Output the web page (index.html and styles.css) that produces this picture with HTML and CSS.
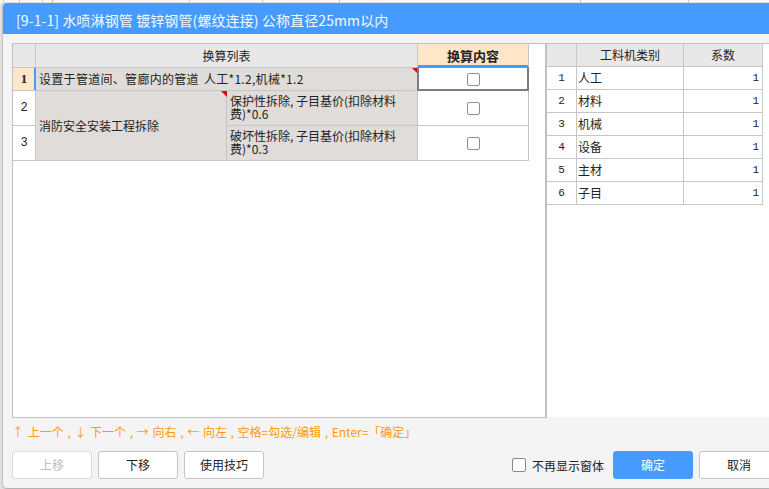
FILE: index.html
```html
<!DOCTYPE html>
<html lang="zh-CN">
<head>
<meta charset="utf-8">
<title>换算</title>
<link rel="stylesheet" href="styles.css">
</head>
<body>
<div class="bg-app">
  <span class="bg-cell w4"></span><span class="bg-cell w16"></span><span class="bg-cell w23"></span><span class="bg-cell w10 orange"></span><span class="bg-cell w137"></span><span class="bg-cell w73"></span><span class="bg-cell w77"></span><span class="bg-cell w241"></span><span class="bg-cell w108"></span>
</div>
<div class="dialog">
  <div class="titlebar">[9-1-1] 水喷淋钢管 镀锌钢管(螺纹连接) 公称直径25mm以内</div>
  <div class="dlg-body">
    <div class="panels">
      <div class="left-panel">
        <div class="grid-left">
          <div class="hc"></div>
          <div class="hc span2">换算列表</div>
          <div class="hc hl">换算内容</div>

          <div class="rn cur">1</div>
          <div class="tc span2 mark">设置于管道间、管廊内的管道 人工*1.2,机械*1.2</div>
          <div class="cc sel"><span class="cb"></span></div>

          <div class="rn">2</div>
          <div class="tc mark merged">消防安全安装工程拆除</div>
          <div class="tc wrap">保护性拆除, 子目基价(扣除材料费)*0.6</div>
          <div class="cc"><span class="cb"></span></div>

          <div class="rn">3</div>
          <div class="tc wrap">破坏性拆除, 子目基价(扣除材料费)*0.3</div>
          <div class="cc"><span class="cb"></span></div>
        </div>
      </div>
      <div class="splitter"></div>
      <div class="right-panel">
        <div class="grid-right">
          <div class="rh"></div><div class="rh">工料机类别</div><div class="rh">系数</div>
          <div class="rnum">1</div><div class="cat">人工</div><div class="coef">1</div>
          <div class="rnum">2</div><div class="cat">材料</div><div class="coef">1</div>
          <div class="rnum">3</div><div class="cat">机械</div><div class="coef">1</div>
          <div class="rnum">4</div><div class="cat">设备</div><div class="coef">1</div>
          <div class="rnum">5</div><div class="cat">主材</div><div class="coef">1</div>
          <div class="rnum">6</div><div class="cat">子目</div><div class="coef">1</div>
        </div>
      </div>
    </div>
    <div class="hint">↑ 上一个 , ↓ 下一个 , → 向右 , ← 向左 , 空格=勾选/编辑 , Enter=「确定」</div>
    <div class="footer">
      <div class="btn-group">
        <button class="btn disabled" type="button">上移</button>
        <button class="btn" type="button">下移</button>
        <button class="btn" type="button">使用技巧</button>
      </div>
      <label class="check-label"><span class="cb-lg"></span>不再显示窗体</label>
      <div class="btn-group">
        <button class="btn primary" type="button">确定</button>
        <button class="btn" type="button">取消</button>
      </div>
    </div>
  </div>
</div>
</body>
</html>
```

FILE: styles.css
```css
html, body {
  margin: 0;
  padding: 0;
}
body {
  width: 769px;
  height: 489px;
  overflow: hidden;
  background: #e4e4e4;
  font-family: "Noto Sans CJK SC", "Microsoft YaHei", sans-serif;
  color: #222;
}

/* remnant of the application behind the dialog */
.bg-app {
  height: 3px;
  display: flex;
  background: #fafafa;
  overflow: hidden;
}
.bg-cell {
  flex: none;
  height: 3px;
  border-right: 1px solid #c8c8c8;
  box-sizing: border-box;
}
.bg-cell.orange { border-right-color: #f0b060; }
.w4 { width: 4px; }
.w16 { width: 16px; }
.w23 { width: 23px; }
.w10 { width: 10px; }
.w137 { width: 137px; }
.w73 { width: 73px; }
.w77 { width: 77px; }
.w241 { width: 241px; }
.w108 { width: 108px; }

.dialog {
  margin-left: 3px;
  width: 786px;
  height: 485px;
  background: #f4f4f4;
  border-radius: 4px;
  overflow: hidden;
  box-shadow: 0 0 0 1px rgba(0, 0, 0, 0.06), 0 1px 3px rgba(0, 0, 0, 0.25);
}

.titlebar {
  height: 31px;
  background: #459bff;
  color: #f6faff;
  font-size: 14px;
  line-height: 34px;
  padding-left: 13px;
  white-space: nowrap;
  box-sizing: border-box;
  letter-spacing: 0.1px;
}

.dlg-body {
  padding: 9px 0 0 9px;
}

.panels {
  display: flex;
  height: 374px;
  border-top: 1px solid #c0c0c0;
}
.left-panel {
  width: 533px;
  height: 374px;
  box-sizing: border-box;
  background: #fff;
  border-left: 1px solid #c0c0c0;
  border-bottom: 1px solid #c0c0c0;
}
.splitter {
  width: 2px;
  height: 374px;
  background: #c0c0c0;
  flex: none;
}
.right-panel {
  flex: 1;
  height: 373px;
  background: #fff;
}

/* left grid */
.grid-left {
  display: grid;
  grid-template-columns: 23px 191px 191px 111px;
  grid-template-rows: 24px 23px 35px 35px;
  font-size: 12px;
}
.grid-left > div {
  box-sizing: border-box;
  border-right: 1px solid #c6c6c6;
  border-bottom: 1px solid #c6c6c6;
}
.span2 { grid-column: span 2; }
.merged { grid-row: span 2; }

.hc {
  background: #e8e8e8;
  display: flex;
  align-items: center;
  justify-content: center;
  color: #222;
  line-height: 14px;
}
.hl {
  background: #ffe6c9;
  font-weight: bold;
  font-size: 13px;
  box-shadow: inset 0 -2px 0 #459bff;
}
.rn {
  background: #fff;
  display: flex;
  align-items: center;
  justify-content: center;
  font-family: "Liberation Mono", "DejaVu Sans Mono", monospace;
  font-size: 12px;
  color: #222;
}
.grid-left > .rn.cur {
  background: #ffe6c9;
  border-right-color: #459bff;
  box-shadow: inset -1px 0 0 #459bff;
  font-family: "Liberation Serif", serif;
  font-weight: bold;
  font-size: 13px;
}
.tc {
  background: #e0dcd9;
  display: flex;
  align-items: center;
  padding-left: 3px;
  position: relative;
  line-height: 14px;
  white-space: nowrap;
}
.tc.span2 {
  word-spacing: 2px;
  letter-spacing: 0.3px;
}
.tc.wrap {
  white-space: normal;
  line-height: 13px;
  padding-right: 14px;
  padding-bottom: 2px;
}
.mark::after {
  content: "";
  position: absolute;
  top: 0;
  right: -1px;
  width: 0;
  height: 0;
  border-top: 6px solid #e60000;
  border-left: 6px solid transparent;
}
.cc {
  background: #fff;
  display: flex;
  align-items: center;
  justify-content: center;
  position: relative;
}
.sel::before {
  content: "";
  position: absolute;
  left: -1px;
  right: -1px;
  top: -1px;
  bottom: -1px;
  border: 2px solid #7d7d7d;
  border-top: 1px solid #459bff;
}
.cb {
  width: 13px;
  height: 13px;
  box-sizing: border-box;
  border: 1px solid #8e8e8e;
  border-radius: 2px;
  background: #fff;
}

/* right grid */
.grid-right {
  display: grid;
  grid-template-columns: 30px 107px 79px;
  grid-auto-rows: 23px;
  font-size: 12px;
}
.grid-right > div {
  box-sizing: border-box;
  border-right: 1px solid #c6c6c6;
  border-bottom: 1px solid #c6c6c6;
  display: flex;
  align-items: center;
  line-height: 14px;
}
.rh {
  background: #e8e8e8;
  justify-content: center;
}
.rnum {
  justify-content: center;
  font-family: "Liberation Mono", "DejaVu Sans Mono", monospace;
  font-size: 11px;
}
.cat {
  padding-left: 1px;
}
.coef {
  justify-content: flex-end;
  padding-right: 3px;
  font-family: "Liberation Mono", "DejaVu Sans Mono", monospace;
  font-size: 11px;
}

/* hint */
.hint {
  margin-top: 4px;
  height: 20px;
  line-height: 20px;
  font-size: 12px;
  color: #ff9a0a;
  white-space: nowrap;
  word-spacing: 1px;
}

/* footer */
.footer {
  margin-top: 9px;
  display: flex;
  align-items: center;
  padding-right: 10px;
}
.btn-group {
  display: flex;
  gap: 6px;
}
.btn {
  width: 80px;
  height: 28px;
  box-sizing: border-box;
  padding: 0;
  margin: 0;
  border: 1px solid #c4c4c4;
  border-radius: 3px;
  background: #fff;
  color: #222;
  font-family: "Noto Sans CJK SC", "Microsoft YaHei", sans-serif;
  font-size: 12px;
  line-height: 26px;
  text-align: center;
}
.btn.disabled {
  color: #bdbdbd;
  border-color: #dcdcdc;
}
.btn.primary {
  background: #459bff;
  border-color: #459bff;
  color: #fff;
}
.check-label {
  margin-left: auto;
  margin-right: 9px;
  display: flex;
  align-items: center;
  gap: 6px;
  font-size: 12px;
  color: #222;
}
.cb-lg {
  width: 14px;
  height: 14px;
  box-sizing: border-box;
  border: 1px solid #8a8a8a;
  border-radius: 2px;
  background: #fff;
}
```
